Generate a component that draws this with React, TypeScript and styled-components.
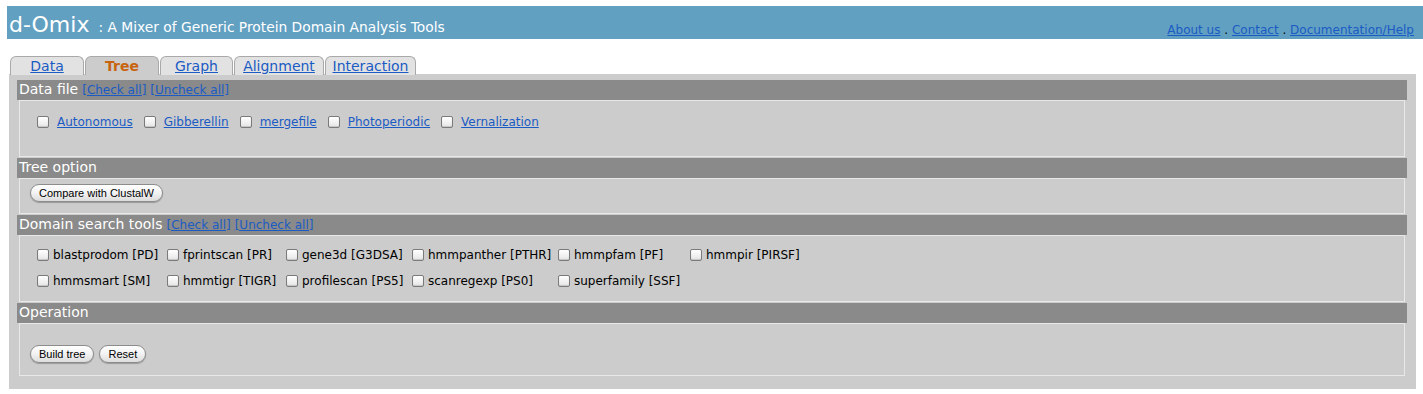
import React from "react";
import styled, { createGlobalStyle } from "styled-components";

const GlobalStyle = createGlobalStyle`
  body {
    margin: 0;
    background: #ffffff;
    font-family: "DejaVu Sans", Verdana, sans-serif;
  }
`;

const Page = styled.div`
  padding: 6px 0 0 7px;
`;

const Banner = styled.div`
  background: #62a0c2;
  height: 33px;
  display: flex;
  align-items: flex-end;
  justify-content: space-between;
  padding: 0 9px 0 2px;
  color: #ffffff;
`;

const Brand = styled.div`
  display: flex;
  align-items: baseline;
  padding-bottom: 2px;
`;

const BrandName = styled.span`
  font-size: 22px;
`;

const BrandTag = styled.span`
  font-size: 13.8px;
  margin-left: 9px;
`;

const TopLinks = styled.div`
  font-size: 12px;
  color: #000000;
  padding-bottom: 2px;

  a {
    color: #1a5bc4;
  }
`;

const TabBar = styled.div`
  display: flex;
  margin: 17px 0 0 3px;
  height: 18px;
`;

const Tab = styled.a<{ $active?: boolean; $width: number }>`
  box-sizing: border-box;
  width: ${(p) => p.$width}px;
  height: 19px;
  margin-right: 1px;
  border: 1px solid #a9a9a9;
  border-bottom: none;
  border-radius: 6px 6px 0 0;
  background: ${(p) => (p.$active ? "#cccccc" : "#e2e2e2")};
  color: ${(p) => (p.$active ? "#c8640f" : "#1a5bc4")};
  font-weight: ${(p) => (p.$active ? "bold" : "normal")};
  text-decoration: ${(p) => (p.$active ? "none" : "underline")};
  font-size: 14px;
  line-height: 18px;
  text-align: center;
  cursor: pointer;
`;

const Panel = styled.div`
  background: #cccccc;
  margin: 0 7px 0 2px;
  padding: 6px 9px 12px 8px;
`;

const SectionHead = styled.div`
  background: #8a8a8a;
  color: #ffffff;
  font-size: 14px;
  height: 20px;
  line-height: 19px;
  padding-left: 2px;
  display: flex;
  align-items: baseline;
  gap: 4px;
`;

const HeadLink = styled.a`
  font-size: 12px;
  color: #1a5bc4;
  text-decoration: underline;
  cursor: pointer;
`;

const SectionBody = styled.div<{ $height: number; $padTop: number }>`
  box-sizing: border-box;
  margin: 0 2px 1px 2px;
  height: ${(p) => p.$height}px;
  border: 1px solid #e8e8e8;
  padding: ${(p) => p.$padTop}px 0 0 17px;
`;

const FileRow = styled.div`
  display: flex;
  align-items: center;
  font-size: 12px;
`;

const FileItem = styled.label`
  display: flex;
  align-items: center;
  gap: 8px;
  margin-right: 11px;

  a {
    color: #1a5bc4;
    text-decoration: underline;
  }
`;

const Check = styled.input.attrs({ type: "checkbox" })`
  appearance: none;
  box-sizing: border-box;
  width: 12px;
  height: 12px;
  margin: 0;
  border: 1px solid #7a7a7a;
  border-radius: 2px;
  background: linear-gradient(#ffffff, #e6e6e6);
  box-shadow: inset 0 -1px 1px rgba(0, 0, 0, 0.15);
  flex-shrink: 0;
`;

const ToolGrid = styled.div`
  display: grid;
  grid-template-columns: 130px 119px 126px 146px 132px auto;
  row-gap: 10px;
  font-size: 12px;
  color: #000000;
`;

const ToolItem = styled.label`
  display: flex;
  align-items: center;
  gap: 4px;
  height: 16px;
`;

const ButtonRow = styled.div`
  display: flex;
  gap: 5px;
  margin-left: -7px;
`;

const PillButton = styled.button`
  font-family: "Liberation Sans", Arial, sans-serif;
  font-size: 11px;
  height: 18px;
  padding: 0 8px;
  border: 1px solid #8c8c8c;
  border-radius: 9px;
  background: linear-gradient(#ffffff 0%, #f2f2f2 50%, #dcdcdc 100%);
  box-shadow: 0 1px 1px rgba(0, 0, 0, 0.25);
  color: #000000;
  cursor: pointer;
`;

const files = ["Autonomous", "Gibberellin", "mergefile", "Photoperiodic", "Vernalization"];

const tools = [
  "blastprodom [PD]",
  "fprintscan [PR]",
  "gene3d [G3DSA]",
  "hmmpanther [PTHR]",
  "hmmpfam [PF]",
  "hmmpir [PIRSF]",
  "hmmsmart [SM]",
  "hmmtigr [TIGR]",
  "profilescan [PS5]",
  "scanregexp [PS0]",
  "superfamily [SSF]",
];

const tabs = [
  { label: "Data", width: 74 },
  { label: "Tree", width: 74, active: true },
  { label: "Graph", width: 73 },
  { label: "Alignment", width: 90 },
  { label: "Interaction", width: 91 },
];

export default function App() {
  return (
    <Page>
      <GlobalStyle />
      <Banner>
        <Brand>
          <BrandName>d-Omix</BrandName>
          <BrandTag>: A Mixer of Generic Protein Domain Analysis Tools</BrandTag>
        </Brand>
        <TopLinks>
          <a href="#">About us</a> . <a href="#">Contact</a> .{" "}
          <a href="#">Documentation/Help</a>
        </TopLinks>
      </Banner>

      <TabBar>
        {tabs.map((t) => (
          <Tab key={t.label} $active={t.active} $width={t.width}>
            {t.label}
          </Tab>
        ))}
      </TabBar>

      <Panel>
        <SectionHead>
          Data file <HeadLink>[Check all]</HeadLink>
          <HeadLink>[Uncheck all]</HeadLink>
        </SectionHead>
        <SectionBody $height={57} $padTop={14}>
          <FileRow>
            {files.map((f) => (
              <FileItem key={f}>
                <Check />
                <a>{f}</a>
              </FileItem>
            ))}
          </FileRow>
        </SectionBody>

        <SectionHead>Tree option</SectionHead>
        <SectionBody $height={36} $padTop={5}>
          <ButtonRow>
            <PillButton>Compare with ClustalW</PillButton>
          </ButtonRow>
        </SectionBody>

        <SectionHead>
          Domain search tools <HeadLink>[Check all]</HeadLink>
          <HeadLink>[Uncheck all]</HeadLink>
        </SectionHead>
        <SectionBody $height={67} $padTop={11}>
          <ToolGrid>
            {tools.map((t) => (
              <ToolItem key={t}>
                <Check />
                {t}
              </ToolItem>
            ))}
          </ToolGrid>
        </SectionBody>

        <SectionHead>Operation</SectionHead>
        <SectionBody $height={53} $padTop={21}>
          <ButtonRow>
            <PillButton>Build tree</PillButton>
            <PillButton>Reset</PillButton>
          </ButtonRow>
        </SectionBody>
      </Panel>
    </Page>
  );
}
